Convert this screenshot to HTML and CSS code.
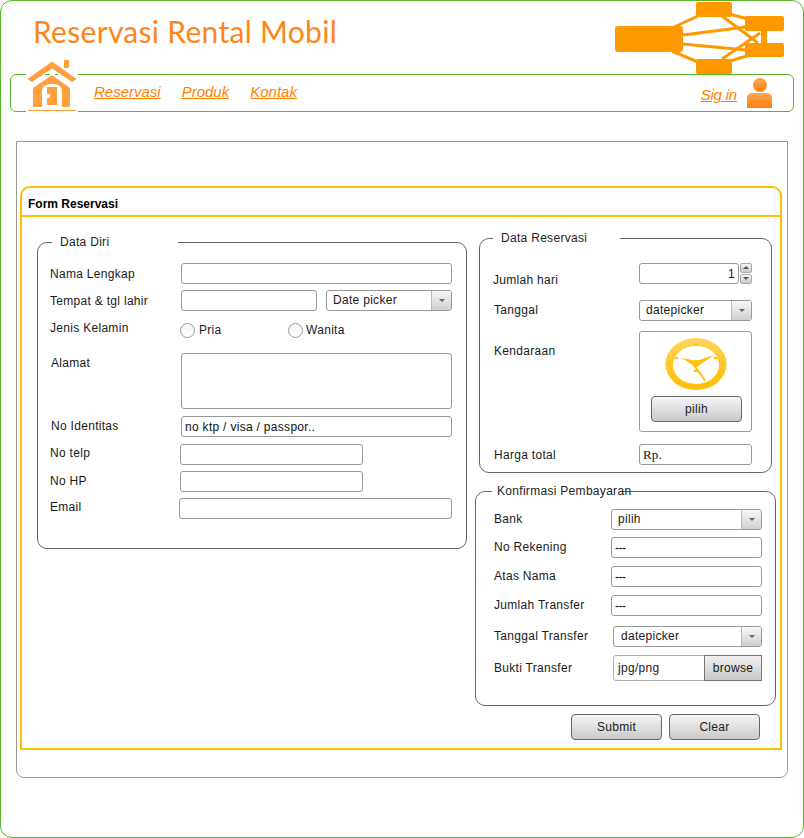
FILE: index.html
```html
<!doctype html>
<html>
<head>
<meta charset="utf-8">
<link rel="stylesheet" href="styles.css">
<title>Reservasi Rental Mobil</title>
</head>
<body>
<div class="frame">
  <div class="header">
    <h1 class="title">Reservasi Rental Mobil</h1>
    <svg class="car" viewBox="615 2 169 72" width="169" height="72">
      <g stroke="#ff9900" stroke-width="3" fill="none">
        <path d="M672 28 700 15M672 51 700 63M683 35 746 27M683 44 746 50M722 16 758 43M722 59 760 33M729 14 748 19M730 61 750 55"/>
      </g>
      <g fill="#ff9900">
        <rect x="615" y="26" width="68" height="26" rx="3"/>
        <rect x="696" y="2" width="36" height="15" rx="2"/>
        <rect x="696" y="59" width="36" height="15" rx="2"/>
        <rect x="745" y="16" width="39" height="15" rx="2"/>
        <rect x="745" y="43" width="39" height="14" rx="2"/>
        <rect x="761" y="30" width="6" height="14"/>
      </g>
    </svg>
  </div>

  <div class="nav">
    <svg class="home" viewBox="26 59 52 53" width="52" height="53">
      <rect x="26" y="72" width="52" height="40" fill="#fff"/>
      <path d="M45 74.500h5M55 74.500h3" stroke="#5ab52a" fill="none"/>
      <g fill="#ffa040">
        <path d="M52 61.500 76.500 79 72 82 52 68.500 32 82 27.500 79Z"/>
        <rect x="64" y="60" width="5" height="8"/>
        <path d="M52 75 70 88V107H33V88Z"/>
      </g>
      <path d="M42 107V91Q42 84 52 84T62 91V107Z" fill="#fff"/>
      <path d="M47 87H57V105H47V98H50V94H47Z" fill="#ffa040"/>
      <path d="M28 110.500H76" stroke="#ffa040" fill="none"/>
    </svg>
    <a class="nav-link" href="#">Reservasi</a>
    <a class="nav-link" href="#">Produk</a>
    <a class="nav-link" href="#">Kontak</a>
    <a class="nav-link signin" href="#">Sig in</a>
    <svg class="person" viewBox="0 0 25 30" width="25" height="30">
      <defs>
        <linearGradient id="person-fill" x1="0" y1="0" x2="0" y2="1">
          <stop offset="0" stop-color="#ffa850"/>
          <stop offset="1" stop-color="#ff7f10"/>
        </linearGradient>
      </defs>
      <circle cx="13" cy="7" r="7" fill="url(#person-fill)"/>
      <path d="M0 30V20Q0 15 6 15H19Q25 15 25 20V30Z" fill="url(#person-fill)"/>
    </svg>
  </div>

  <div class="panel">
    <div class="form-box">
      <div class="form-title">Form Reservasi</div>
      <div class="form-body">

        <fieldset class="group group-diri">
          <legend class="legend-diri">Data Diri</legend>
          <div class="row row-nama">
            <label class="lbl">Nama Lengkap</label>
            <input class="field w-full" type="text">
          </div>
          <div class="row row-tempat">
            <label class="lbl">Tempat &amp; tgl lahir</label>
            <input class="field w-place" type="text">
            <div class="combo w-date"><span class="combo-text">Date picker</span><span class="combo-arrow"></span></div>
          </div>
          <div class="row row-jenis">
            <label class="lbl lbl-up">Jenis Kelamin</label>
            <div class="radio-item radio-pria"><input class="radio" type="radio" name="jk"><span>Pria</span></div>
            <div class="radio-item radio-wanita"><input class="radio" type="radio" name="jk"><span>Wanita</span></div>
          </div>
          <div class="row row-alamat">
            <label class="lbl lbl-top lbl-in">Alamat</label>
            <textarea class="field w-full area"></textarea>
          </div>
          <div class="row row-identitas">
            <label class="lbl lbl-in lbl-lift">No Identitas</label>
            <input class="field w-full" type="text" value="no ktp / visa / passpor..">
          </div>
          <div class="row row-telp">
            <label class="lbl lbl-telp">No telp</label>
            <input class="field w-phone" type="text">
          </div>
          <div class="row row-hp">
            <label class="lbl lbl-hp lbl-lift">No HP</label>
            <input class="field w-phone" type="text">
          </div>
          <div class="row row-email">
            <label class="lbl lbl-email">Email</label>
            <input class="field w-email" type="text">
          </div>
        </fieldset>

        <div class="right-col">
          <fieldset class="group group-reservasi">
            <legend class="legend-reservasi">Data Reservasi</legend>
            <div class="row row-hari">
              <label class="lbl-r lbl-hari">Jumlah hari</label>
              <input class="field w-days num" type="text" value="1">
              <div class="spin">
                <span class="spin-btn"><i class="tri-up"></i></span>
                <span class="spin-btn"><i class="tri-down"></i></span>
              </div>
            </div>
            <div class="row row-tanggal">
              <label class="lbl-r lbl-lift">Tanggal</label>
              <div class="combo w-side"><span class="combo-text">datepicker</span><span class="combo-arrow"></span></div>
            </div>
            <div class="row row-kendaraan">
              <label class="lbl-r lbl-top-k">Kendaraan</label>
              <div class="car-box">
                <svg class="clock" viewBox="664 333 64 60" width="64" height="60">
                  <defs>
                    <linearGradient id="clock-ring" x1="0" y1="0" x2="0" y2="1">
                      <stop offset="0" stop-color="#ffd55e"/>
                      <stop offset="0.5" stop-color="#ffc72c"/>
                      <stop offset="1" stop-color="#ffbf00"/>
                    </linearGradient>
                  </defs>
                  <ellipse cx="696" cy="364" rx="30.500" ry="26" fill="url(#clock-ring)"/>
                  <ellipse cx="696" cy="365" rx="23" ry="19" fill="#fff"/>
                  <g fill="#ffc20e">
                    <rect x="694" y="344" width="4" height="2"/>
                    <rect x="675" y="357" width="3" height="2"/>
                    <rect x="714" y="357" width="3" height="2"/>
                    <rect x="694" y="370" width="4" height="2"/>
                    <path d="M681 357.500 696 361 694 366Z"/>
                    <path d="M714.500 355 696 361 698 366Z"/>
                    <path d="M695 365 706 380 704.500 381 694 367Z"/>
                    <circle cx="696" cy="363.500" r="3.500"/>
                  </g>
                </svg>
                <button class="btn btn-pilih" type="button">pilih</button>
              </div>
            </div>
            <div class="row row-harga">
              <label class="lbl-r">Harga total</label>
              <input class="field w-side serif" type="text" value="Rp.">
            </div>
          </fieldset>

          <fieldset class="group group-bayar">
            <legend class="legend-bayar">Konfirmasi Pembayaran</legend>
            <div class="row row-bank">
              <label class="lbl-b lbl-lift">Bank</label>
              <div class="combo w-pay"><span class="combo-text">pilih</span><span class="combo-arrow"></span></div>
            </div>
            <div class="row row-pay">
              <label class="lbl-b lbl-lift">No Rekening</label>
              <input class="field w-pay dash" type="text" value="---">
            </div>
            <div class="row row-pay-next">
              <label class="lbl-b lbl-lift">Atas Nama</label>
              <input class="field w-pay dash" type="text" value="---">
            </div>
            <div class="row row-pay-next">
              <label class="lbl-b lbl-lift">Jumlah Transfer</label>
              <input class="field w-pay dash" type="text" value="---">
            </div>
            <div class="row row-tgl-transfer">
              <label class="lbl-b lbl-wide lbl-lift">Tanggal Transfer</label>
              <div class="combo w-pay-short"><span class="combo-text combo-text-in">datepicker</span><span class="combo-arrow"></span></div>
            </div>
            <div class="row row-bukti">
              <label class="lbl-b lbl-wide">Bukti Transfer</label>
              <div class="upload">
                <span class="upload-name">jpg/png</span>
                <span class="upload-btn">browse</span>
              </div>
            </div>
          </fieldset>

          <div class="actions">
            <button class="btn" type="button">Submit</button>
            <button class="btn" type="button">Clear</button>
          </div>
        </div>

      </div>
    </div>
  </div>
</div>
</body>
</html>
```

FILE: styles.css
```css
* {
    box-sizing: border-box;
}
html, body {
    margin: 0;
    padding: 0;
    background: #fff;
}
body {
    font-family: "Liberation Sans", Arial, sans-serif;
    font-size: 12px;
    letter-spacing: 0.3px;
    color: #1a1a1a;
}
.frame {
    position: relative;
    width: 804px;
    height: 838px;
    border: 1px solid #5ab52a;
    border-radius: 12px;
    overflow: hidden;
}

/* header */
.header {
    height: 73px;
    padding: 11px 0 0 32px;
}
.title {
    margin: 0;
    font-family: Lato, sans-serif;
    font-size: 30px;
    line-height: 38px;
    font-weight: 400;
    letter-spacing: 0.3px;
    color: #ff8519;
}
.car {
    position: absolute;
    left: 614px;
    top: 1px;
    z-index: 2;
}

/* nav */
.nav {
    position: relative;
    display: flex;
    align-items: center;
    gap: 21px;
    height: 38px;
    margin: 0 9px;
    padding: 0 21px 0 83px;
    border: 1px solid #5ab52a;
    border-radius: 6px;
}
.home {
    position: absolute;
    left: 15px;
    top: -16px;
}
.nav-link {
    font-size: 15px;
    font-style: italic;
    letter-spacing: 0;
    color: #ff8000;
    padding-bottom: 3px;
}
.signin {
    margin-left: auto;
    padding-bottom: 0;
    padding-top: 3px;
    letter-spacing: -0.2px;
}
.person {
    margin-left: -11px;
    margin-top: -1px;
}

/* panel */
.panel {
    height: 637px;
    margin: 29px 15px 0;
    padding: 44px 0 0 3px;
    border: 1px solid #999;
    border-radius: 0 0 8px 8px;
}
.form-box {
    width: 762px;
    height: 564px;
    border: 2px solid #ffc000;
    border-radius: 10px 10px 0 0;
}
.form-title {
    height: 29px;
    padding-left: 6px;
    border-bottom: 2px solid #ffc000;
    font-weight: bold;
    letter-spacing: 0;
    line-height: 32px;
    color: #000;
}
.form-body {
    display: flex;
    gap: 8px;
    padding: 0 0 0 15px;
}

/* groups */
.group {
    margin: 0;
    padding: 0;
    border: 1px solid #666;
    border-radius: 10px;
    min-width: 0;
}
.group legend {
    height: 16px;
    padding: 0 0 0 8px;
    line-height: 16px;
    color: #222;
}
.group-diri {
    width: 430px;
    height: 315px;
    margin-top: 17px;
    padding-left: 12px;
}
.legend-diri {
    width: 126px;
    margin-left: 2px;
}
.right-col {
    width: 302px;
    padding-top: 13px;
}
.group-reservasi {
    width: 293px;
    height: 243px;
    margin-left: 4px;
    padding-left: 13px;
}
.legend-reservasi {
    width: 127px;
}
.group-bayar {
    width: 301px;
    height: 223px;
    margin-top: 10px;
    padding-left: 18px;
}
.group .legend-bayar {
    width: 128px;
    margin-left: -2px;
    padding-left: 5px;
    white-space: nowrap;
}

/* rows */
.row {
    display: flex;
    align-items: center;
}
.row-nama { margin-top: 13px; }
.row-tempat { margin-top: 6px; }
.row-jenis { margin-top: 8px; height: 21px; }
.row-alamat { margin-top: 13px; align-items: flex-start; }
.row-identitas { margin-top: 7px; }
.row-telp { margin-top: 7px; }
.row-hp { margin-top: 6px; }
.row-email { margin-top: 6px; }
.row-hari { margin-top: 17px; align-items: flex-start; }
.row-tanggal { margin-top: 13px; }
.row-kendaraan { margin-top: 10px; align-items: flex-start; }
.row-harga { margin-top: 12px; }
.row-bank { margin-top: 10px; }
.row-pay { margin-top: 7px; }
.row-pay-next { margin-top: 8px; }
.row-tgl-transfer { margin-top: 10px; }
.row-bukti { margin-top: 8px; }

.lbl {
    width: 131px;
    flex: none;
}
.lbl-up { padding-bottom: 4px; }
.lbl-top { padding-top: 3px; }
.lbl-in { padding-left: 1px; }
.lbl-lift { padding-bottom: 2px; }
.lbl-telp { width: 130px; padding-bottom: 3px; }
.lbl-hp { width: 130px; }
.lbl-email { width: 129px; padding-bottom: 3px; }
.lbl-r {
    width: 146px;
    flex: none;
    padding-left: 1px;
}
.lbl-hari { padding: 10px 0 0; }
.lbl-top-k { padding-top: 13px; }
.lbl-b {
    width: 117px;
    flex: none;
}
.lbl-wide { width: 119px; }

/* inputs */
.field {
    display: block;
    height: 21px;
    margin: 0;
    padding: 0 3px;
    border: 1px solid #999;
    border-radius: 3px;
    background: #fff;
    font: inherit;
    letter-spacing: inherit;
    color: #111;
    outline: none;
}
.w-full { width: 271px; }
.w-place { width: 136px; }
.w-phone { width: 183px; }
.w-email { width: 273px; }
.w-days { width: 100px; }
.w-side { width: 113px; }
.w-pay { width: 151px; }
.w-pay-short { width: 149px; }
.w-date { width: 126px; margin-left: 9px; }
.area {
    height: 56px;
    resize: none;
}
.num {
    text-align: right;
}
.serif {
    font-family: "Liberation Serif", serif;
    font-size: 13px;
    letter-spacing: 0.2px;
}
.dash {
    letter-spacing: -0.5px;
}

/* combo */
.combo {
    display: flex;
    height: 21px;
    border: 1px solid #999;
    border-radius: 3px;
    overflow: hidden;
}
.combo-text {
    flex: 1;
    padding-left: 6px;
    line-height: 19px;
}
.combo-text-in {
    padding-left: 7px;
}
.combo-arrow {
    position: relative;
    width: 20px;
    flex: none;
    border-left: 1px solid #bbb;
    background: linear-gradient(#f8f8f8, #cfcfcf);
}
.combo-arrow:after {
    content: "";
    position: absolute;
    left: 7px;
    top: 8px;
    border: 3px solid transparent;
    border-top: 3px solid #666;
    border-bottom: 0;
}

/* radio */
.radio-item {
    display: flex;
    align-items: center;
    gap: 4px;
    margin-left: -1px;
    padding-top: 2px;
}
.radio-item span {
    padding-bottom: 2px;
}
.radio-pria {
    width: 109px;
}
.radio-wanita {
    gap: 3px;
}
.radio {
    appearance: none;
    width: 15px;
    height: 15px;
    margin: 0;
    border: 1px solid #999;
    border-radius: 50%;
    background: linear-gradient(#f4f4f4, #fff);
}

/* spinner */
.spin {
    display: flex;
    flex-direction: column;
    gap: 1px;
    margin-left: 1px;
}
.spin-btn {
    position: relative;
    display: block;
    width: 12px;
    height: 10px;
    border: 1px solid #aaa;
    border-radius: 2px;
    background: linear-gradient(#f4f4f4, #c8c8c8);
}
.tri-up, .tri-down {
    position: absolute;
    left: 2px;
    top: 2px;
    border: 3px solid transparent;
    border-top: 0;
    border-bottom: 3px solid #555;
}
.tri-down {
    border-bottom: 0;
    border-top: 3px solid #555;
}

/* kendaraan box */
.car-box {
    display: flex;
    flex-direction: column;
    align-items: center;
    width: 113px;
    height: 101px;
    padding-top: 1px;
    border: 1px solid #999;
    border-radius: 3px;
}
.clock {
    display: block;
    flex: none;
    margin-left: 1px;
}
.btn-pilih {
    flex: none;
    margin: 3px 0 0 2px;
}

/* buttons */
.btn {
    width: 91px;
    height: 26px;
    padding: 0;
    border: 1px solid #666;
    border-radius: 4px;
    background: linear-gradient(#f6f6f6, #c9c9c9);
    font: inherit;
    letter-spacing: inherit;
    color: #222;
}
.actions {
    display: flex;
    justify-content: flex-end;
    gap: 7px;
    margin-top: 8px;
    padding-right: 17px;
}

/* upload */
.upload {
    display: flex;
    width: 149px;
    height: 26px;
    border: 1px solid #aaa;
    border-radius: 3px 0 0 3px;
}
.upload-name {
    flex: 1;
    padding-left: 4px;
    line-height: 24px;
}
.upload-btn {
    width: 58px;
    margin: -1px -1px -1px 0;
    border: 1px solid #777;
    background: linear-gradient(#f0f0f0, #c9c9c9);
    line-height: 24px;
    text-align: center;
}
```
